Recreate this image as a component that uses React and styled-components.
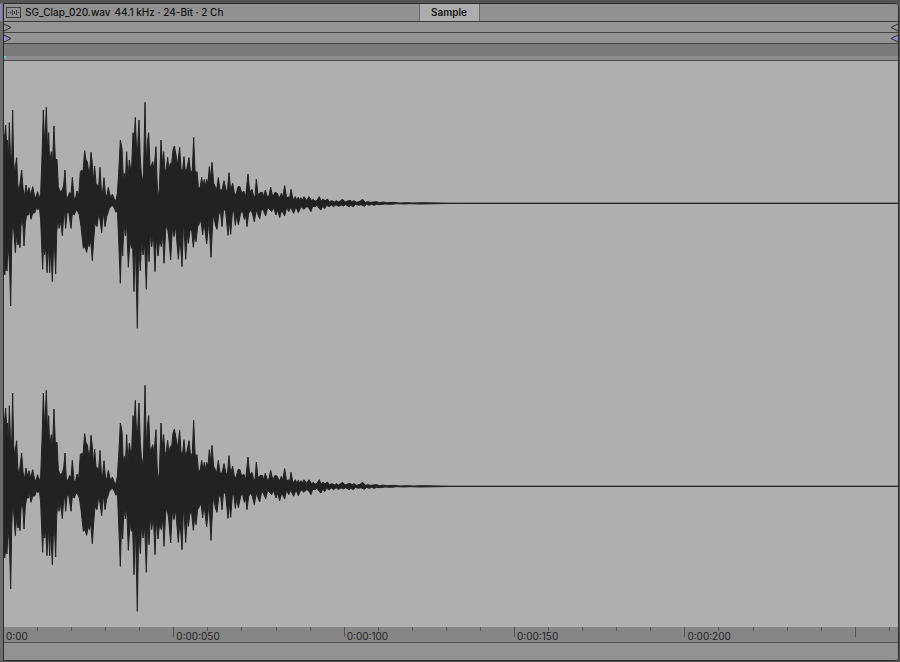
import React from 'react';
import styled, { createGlobalStyle } from 'styled-components';

// peaks of the clip: time, level
const upper = [
    [12, 205], [14, 200], [17, 235], [20, 175], [22, 190], [25, 130], [28, 242], [31, 150], [33, 140], [35, 130], [38, 280],
    [41, 125], [44, 90], [46, 110], [50, 137], [53, 60], [57, 30], [60, 60], [65, 100], [69, 45], [73, 20], [78, 55], [82, 30],
    [87, 47], [92, 25], [98, 50], [104, 20], [108, 18], [113, 35], [118, 15], [122, 30], [126, 140], [130, 280], [134, 170],
    [139, 288], [143, 150], [146, 212], [149, 120], [154, 155], [157, 110], [162, 232], [166, 130], [171, 132], [175, 50],
    [180, 35], [187, 40], [191, 55], [195, 100], [199, 20], [204, 18], [209, 33], [213, 25], [217, 78], [222, 18], [226, 12],
    [231, 37], [236, 22], [241, 95], [245, 100], [249, 95], [254, 158], [258, 130], [262, 125], [267, 85], [270, 110],
    [273, 153], [277, 120], [280, 65], [284, 112], [288, 60], [292, 55], [296, 50], [300, 108], [304, 40], [307, 25], [312, 77],
    [317, 20], [321, 25], [325, 48], [332, 15], [337, 28], [343, 12], [348, 8], [352, 30], [356, 90], [361, 190], [366, 165],
    [370, 70], [373, 90], [376, 60], [380, 155], [384, 75], [388, 130], [392, 100], [395, 110], [399, 212], [402, 180],
    [406, 258], [410, 150], [413, 170], [417, 250], [421, 130], [424, 90], [427, 75], [430, 65], [435, 303], [439, 110],
    [442, 180], [446, 212], [450, 110], [455, 115], [458, 125], [462, 100], [468, 170], [471, 70], [474, 18], [478, 40],
    [483, 190], [487, 120], [491, 155], [495, 95], [499, 105], [503, 138], [507, 100], [511, 120], [515, 120], [519, 160],
    [523, 172], [528, 145], [533, 115], [539, 168], [543, 105], [547, 90], [552, 140], [556, 95], [561, 105], [567, 137],
    [572, 90], [577, 100], [581, 198], [585, 100], [588, 85], [591, 95], [595, 50], [600, 45], [605, 78], [609, 50], [613, 72],
    [617, 50], [620, 72], [624, 60], [628, 110], [632, 75], [636, 123], [641, 60], [646, 50], [650, 40], [655, 78], [660, 40],
    [666, 40], [672, 68], [678, 40], [682, 35], [687, 92], [692, 40], [698, 60], [704, 25], [709, 30], [714, 50], [720, 50],
    [725, 30], [731, 37], [737, 20], [744, 88], [749, 35], [756, 42], [761, 20], [765, 20], [769, 73], [774, 25], [780, 32],
    [787, 33], [791, 20], [796, 40], [802, 20], [807, 22], [812, 48], [818, 20], [825, 33], [832, 30], [838, 15], [844, 30],
    [848, 18], [854, 53], [860, 15], [865, 20], [869, 15], [873, 42], [879, 10], [886, 20], [890, 10], [895, 18], [899, 9],
    [903, 17], [907, 10], [912, 20], [920, 9], [927, 20], [935, 8], [940, 12], [945, 6], [951, 9], [958, 20], [963, 7],
    [970, 13], [975, 7], [982, 13], [988, 5], [996, 8], [1003, 4], [1009, 8], [1016, 4], [1028, 12], [1035, 4], [1043, 7],
    [1050, 9], [1056, 5], [1062, 8], [1070, 3], [1080, 6], [1088, 12], [1096, 3], [1104, 5], [1112, 3], [1130, 5], [1138, 2],
    [1150, 4], [1160, 2], [1180, 3], [1200, 1], [1220, 2], [1240, 1], [1268, 2], [1320, 1], [1370, 0], [2694, 0],
];

const lower = [
    [12, 190], [14, 215], [17, 190], [21, 203], [24, 120], [27, 160], [29, 200], [32, 308], [35, 130], [38, 45], [42, 90],
    [46, 148], [50, 90], [54, 125], [57, 110], [60, 133], [63, 70], [66, 40], [69, 70], [72, 128], [76, 60], [80, 35], [85, 35],
    [88, 20], [93, 48], [98, 30], [105, 28], [109, 12], [113, 20], [118, 12], [122, 50], [128, 198], [131, 120], [134, 155],
    [137, 130], [141, 208], [145, 120], [149, 208], [152, 130], [157, 235], [160, 150], [163, 120], [167, 212], [170, 90],
    [174, 40], [177, 75], [181, 50], [187, 97], [191, 40], [194, 30], [197, 75], [201, 30], [206, 25], [213, 75], [217, 30],
    [223, 35], [228, 20], [232, 22], [238, 35], [243, 70], [250, 135], [255, 130], [260, 147], [265, 120], [268, 130],
    [272, 110], [277, 172], [281, 110], [285, 60], [291, 70], [296, 30], [300, 50], [305, 88], [310, 25], [315, 70], [320, 40],
    [325, 25], [328, 15], [337, 5], [343, 15], [348, 27], [352, 15], [356, 110], [361, 240], [365, 100], [368, 158], [372, 60],
    [376, 98], [380, 60], [385, 192], [390, 110], [394, 135], [398, 130], [402, 265], [406, 110], [412, 375], [416, 130],
    [421, 202], [425, 110], [429, 155], [434, 120], [439, 258], [443, 100], [447, 175], [451, 90], [455, 130], [460, 90],
    [465, 205], [469, 100], [474, 158], [479, 110], [484, 130], [488, 90], [492, 180], [497, 80], [501, 65], [506, 98],
    [512, 170], [517, 75], [522, 100], [527, 70], [535, 168], [540, 100], [546, 190], [551, 50], [557, 168], [562, 90],
    [565, 120], [570, 80], [575, 80], [580, 132], [585, 85], [588, 115], [593, 70], [599, 60], [603, 50], [608, 95], [612, 55],
    [620, 122], [627, 50], [633, 162], [638, 60], [641, 30], [646, 65], [651, 78], [656, 35], [661, 20], [666, 70], [670, 25],
    [676, 15], [684, 96], [688, 50], [692, 93], [697, 30], [701, 20], [706, 66], [710, 35], [715, 64], [722, 30], [727, 20],
    [733, 48], [737, 35], [741, 70], [746, 30], [752, 20], [757, 30], [763, 55], [769, 20], [779, 47], [784, 20], [789, 18],
    [797, 38], [803, 12], [815, 25], [820, 12], [828, 35], [833, 20], [839, 43], [845, 20], [854, 38], [860, 10], [866, 25],
    [872, 12], [881, 30], [888, 10], [895, 28], [903, 10], [912, 18], [920, 10], [925, 12], [933, 25], [938, 9], [945, 10],
    [951, 6], [957, 15], [963, 20], [968, 8], [974, 16], [980, 6], [988, 10], [994, 5], [1001, 10], [1008, 4], [1015, 9],
    [1024, 5], [1030, 8], [1037, 4], [1047, 10], [1053, 6], [1060, 10], [1067, 3], [1075, 6], [1083, 4], [1093, 9], [1100, 3],
    [1108, 6], [1115, 3], [1122, 6], [1130, 3], [1140, 4], [1155, 2], [1175, 3], [1190, 1], [1215, 2], [1230, 1], [1260, 2],
    [1320, 1], [1370, 0], [2694, 0],
];

const middle = 427;

const outline = [
    ...upper.map(([x, level]) => `${x},${middle - level}`),
    ...[...lower].reverse().map(([x, level]) => `${x},${middle + level}`),
].join(' ');

const times = ['0:00', '0:00:050', '0:00:100', '0:00:150', '0:00:200'];

function Channel() {
  return (
    <Wave viewBox="12 0 2682 849" preserveAspectRatio="none" aria-hidden="true">
        <polygon points={outline} fill="#222" stroke="#222" strokeWidth="3" strokeLinejoin="round" />
    </Wave>
  )
}

function Marker({ flip, fill }) {
  return (
    <Flag $flip={flip} viewBox="0 0 8 9" aria-hidden="true">
        <path d="M0 1 L7 4.5 L0 8" fill={fill} stroke="#2c2c2c" strokeWidth="1" />
    </Flag>
  )
}

function App() {
  return (
    <>
        <Global />
        <Editor>
            <Edge><Tint /></Edge>
            <Panel>
                <Header>
                    <Title>
                        <Clip viewBox="0 0 15 11" aria-hidden="true">
                            <rect x="0.5" y="0.5" width="14" height="10" fill="none" stroke="#3c3c3c" />
                            <path d="M2 5.5H3M4.5 4.5V6.5M6.5 3V8M8.5 4V7M10.5 3V8M12 5.5H13" stroke="#3c3c3c" fill="none" />
                        </Clip>
                        <Name>SG_Clap_020.wav</Name>
                        <Name>44.1 kHz · 24-Bit · 2 Ch</Name>
                    </Title>
                    <Tab type="button">Sample</Tab>
                    <Rest />
                </Header>
                <Lane>
                    <Marker fill="none" />
                    <Marker flip fill="none" />
                </Lane>
                <Lane>
                    <Marker fill="#8d90cf" />
                    <Marker flip fill="#8d90cf" />
                </Lane>
                <Strip />
                <Warp>
                    <Start viewBox="0 0 3 3" aria-hidden="true"><path d="M0 0H3L0 3Z" fill="#5fe0e0" /></Start>
                </Warp>
                <Display>
                    <Channel />
                    <Channel />
                </Display>
                <Ruler>
                    {times.map((time) => (
                        <Segment key={time}>
                            <Ticks>
                                <Tick /><Tick /><Tick /><Tick /><Tick $tall />
                            </Ticks>
                            <Time>{time}</Time>
                        </Segment>
                    ))}
                    <Tail><Tick /></Tail>
                </Ruler>
                <Footer />
            </Panel>
        </Editor>
    </>
  )
}

const Global = createGlobalStyle`
    body {
        margin: 0;
        background: #555;
        font-family: Inter, sans-serif;
    }
    * {
        box-sizing: border-box;
    }
`;
const Editor = styled.main`
    display: flex;
    min-height: 100vh;
    padding: 3px 1px 1px 0;
    background: #555;
`;
const Edge = styled.div`
    width: 3px;
    padding-top: 1px;
    background: #6c6c6c;
`;
const Tint = styled.div`
    width: 2px;
    height: 17px;
    background: #8485b8;
`;
const Panel = styled.section`
    flex: 1;
    display: flex;
    flex-direction: column;
    min-width: 0;
    border: 1px solid #2c2c2c;
    border-radius: 0 4px 4px 0;
    overflow: hidden;
    background: #929292;
`;
const Header = styled.header`
    display: flex;
    height: 18px;
    padding-right: 6px;
    border-bottom: 1px solid #3a3a3a;
    background: #919191;
`;
const Title = styled.div`
    flex: 1;
    display: flex;
    align-items: center;
    gap: 4px;
    padding: 0 0 1px 2px;
`;
const Clip = styled.svg`
    width: 15px;
    height: 11px;
`;
const Name = styled.span`
    color: #141414;
    font-size: 10px;
    line-height: 16px;
    font-weight: 500;
    white-space: pre;
`;
const Tab = styled.button`
    width: 61px;
    padding: 0 0 1px;
    border: solid #6a6a6a;
    border-width: 0 1px;
    background: #adadad;
    color: #141414;
    font-family: inherit;
    font-size: 10px;
    line-height: 16px;
    font-weight: 600;
`;
const Rest = styled.div`
    flex: 1;
`;
const Lane = styled.div`
    display: flex;
    align-items: center;
    justify-content: space-between;
    height: 11px;
    border-bottom: 1px solid #444;
    background: #949494;
`;
const Flag = styled.svg`
    width: 8px;
    height: 9px;
    transform: ${(props) => (props.$flip ? 'scaleX(-1)' : 'none')};
`;
const Strip = styled.div`
    height: 12px;
    background: #7b7b7b;
`;
const Warp = styled.div`
    display: flex;
    height: 5px;
    border-bottom: 1px solid #4c4c4c;
    background: #8c8c8c;
`;
const Start = styled.svg`
    width: 3px;
    height: 3px;
`;
const Display = styled.div`
    flex: 1;
    display: grid;
    grid-template-rows: 1fr 1fr;
    min-height: 200px;
    background: #afafaf;
`;
const Wave = styled.svg`
    display: block;
    width: 100%;
    height: 100%;
    min-height: 0;
`;
const Ruler = styled.div`
    display: grid;
    grid-template-columns: repeat(5, 500fr) 124fr;
    height: 16px;
    border-bottom: 1px solid #555;
    background: #868686;
`;
const Segment = styled.div`
    display: grid;
    grid-template-rows: 14px;
`;
const Ticks = styled.div`
    grid-area: 1 / 1;
    display: grid;
    grid-template-columns: repeat(5, 1fr);
`;
const Tick = styled.span`
    height: ${(props) => (props.$tall ? 10 : 4)}px;
    border-right: 1px solid #555;
`;
const Time = styled.span`
    grid-area: 1 / 1;
    align-self: end;
    padding-left: 2px;
    color: #222;
    font-size: 10px;
    line-height: 10px;
`;
const Tail = styled.div`
    display: grid;
    grid-template-columns: 100fr 24fr;
`;
const Footer = styled.footer`
    height: 17px;
    background: #929292;
`;
export default App
